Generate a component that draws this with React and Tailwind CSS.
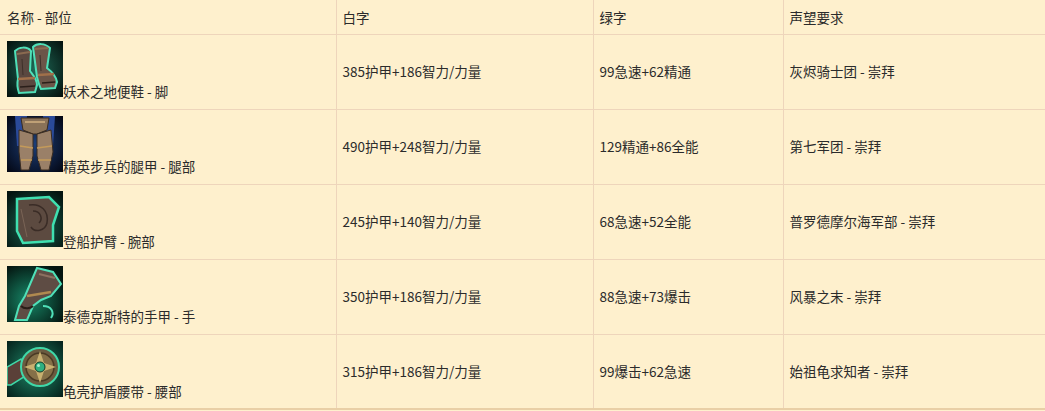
import React from "react";

// item icons drawn roughly after the game icons
const Boots = () => (
    <svg width="56" height="56" viewBox="0 0 56 56" className="block">
        <defs>
            <radialGradient id="bg1" cx="50%" cy="50%" r="70%">
                <stop offset="0%" stopColor="#1f6b58" />
                <stop offset="100%" stopColor="#04100d" />
            </radialGradient>
        </defs>
        <rect width="56" height="56" fill="url(#bg1)" />
        <path d="M8 10 C12 6 20 5 24 10 L23 30 C26 34 30 38 30 44 L28 51 L12 52 C10 46 10 42 11 38 Z" fill="#5a4840" stroke="#4fe0b8" strokeWidth="2" />
        <path d="M26 6 C30 2 38 2 43 7 L40 27 C44 30 49 35 50 41 L48 47 L34 48 C32 44 31 40 30 36 Z" fill="#6b5548" stroke="#4fe0b8" strokeWidth="2" />
        <path d="M11 38 L28 37 M31 34 L47 33" stroke="#a0704a" strokeWidth="2.5" />
        <path d="M10 13 L23 11 M28 8 L41 7" stroke="#8a6a50" strokeWidth="2" />
        <path d="M13 46 L28 45 M35 42 L48 41" stroke="#2a1f1a" strokeWidth="1.5" />
        <path d="M15 18 L16 34 M33 14 L34 30" stroke="#3e302a" strokeWidth="1" />
    </svg>
);

const Legs = () => (
    <svg width="56" height="56" viewBox="0 0 56 56" className="block">
        <defs>
            <radialGradient id="bg2" cx="50%" cy="50%" r="70%">
                <stop offset="0%" stopColor="#1c3f7a" />
                <stop offset="100%" stopColor="#030612" />
            </radialGradient>
        </defs>
        <rect width="56" height="56" fill="url(#bg2)" />
        <path d="M8 0 L20 0 L16 30 L10 30 Z" fill="#2a4a9a" />
        <path d="M36 0 L48 0 L46 30 L40 30 Z" fill="#2a4a9a" />
        <path d="M14 2 L42 2 L40 14 L30 18 L26 18 L16 14 Z" fill="#8a7258" stroke="#3a2c20" strokeWidth="1" />
        <path d="M12 14 L26 18 L26 40 L22 54 L14 54 L12 36 Z" fill="#9a8068" stroke="#3a2c20" strokeWidth="1" />
        <path d="M30 18 L44 14 L46 36 L42 54 L34 54 L30 40 Z" fill="#9a8068" stroke="#3a2c20" strokeWidth="1" />
        <path d="M13 30 L26 32 M30 32 L45 30 M14 44 L25 44 M31 44 L44 44" stroke="#c49a5a" strokeWidth="1.5" />
        <path d="M18 6 L38 6" stroke="#d0b080" strokeWidth="1.5" />
    </svg>
);

const Bracer = () => (
    <svg width="56" height="56" viewBox="0 0 56 56" className="block">
        <defs>
            <radialGradient id="bg3" cx="50%" cy="60%" r="70%">
                <stop offset="0%" stopColor="#1a6a55" />
                <stop offset="100%" stopColor="#041410" />
            </radialGradient>
        </defs>
        <rect width="56" height="56" fill="url(#bg3)" />
        <path d="M10 8 L42 6 L52 16 L46 34 L46 50 L16 52 L10 40 Z" fill="#5c4a40" stroke="#3fe0b0" strokeWidth="2.5" />
        <path d="M22 14 C34 12 42 20 40 32 C38 40 28 42 24 36" fill="none" stroke="#3a2c26" strokeWidth="1.5" />
        <path d="M26 20 C34 20 36 28 32 32" fill="none" stroke="#3a2c26" strokeWidth="1.5" />
        <path d="M14 18 L20 46" stroke="#7a6456" strokeWidth="1" />
    </svg>
);

const Gauntlet = () => (
    <svg width="56" height="56" viewBox="0 0 56 56" className="block">
        <defs>
            <radialGradient id="bg4" cx="40%" cy="60%" r="70%">
                <stop offset="0%" stopColor="#178868" />
                <stop offset="100%" stopColor="#04140f" />
            </radialGradient>
        </defs>
        <rect width="56" height="56" fill="url(#bg4)" />
        <path d="M30 2 L46 6 L54 18 L44 30 L34 34 L26 40 L20 54 L8 54 L12 40 L18 30 Z" fill="#5e4c44" stroke="#4fe0b8" strokeWidth="2" />
        <path d="M20 30 L44 26" stroke="#b08a50" strokeWidth="2.5" />
        <path d="M14 40 C18 44 24 42 26 40" fill="none" stroke="#2a1e18" strokeWidth="2" />
        <path d="M32 8 L48 12" stroke="#8c7060" strokeWidth="2" />
        <path d="M36 40 C44 40 48 46 44 52" fill="none" stroke="#4fe0b8" strokeWidth="2" />
    </svg>
);

const Belt = () => (
    <svg width="56" height="56" viewBox="0 0 56 56" className="block">
        <defs>
            <radialGradient id="bg5" cx="50%" cy="50%" r="70%">
                <stop offset="0%" stopColor="#1f8a6a" />
                <stop offset="100%" stopColor="#05201a" />
            </radialGradient>
        </defs>
        <rect width="56" height="56" fill="url(#bg5)" />
        <path d="M0 26 L14 18 L20 34 L4 44 L0 44 Z" fill="#5a4038" stroke="#3fd8a8" strokeWidth="1.5" />
        <circle cx="33" cy="26" r="19" fill="#6a5a40" stroke="#3fd8a8" strokeWidth="2" />
        <circle cx="33" cy="26" r="14" fill="#857048" stroke="#4a3a24" strokeWidth="1.5" />
        <path d="M33 10 L37 22 L49 26 L37 30 L33 42 L29 30 L17 26 L29 22 Z" fill="#c8b070" />
        <circle cx="33" cy="26" r="5" fill="#2fb080" stroke="#0e3a2a" strokeWidth="1" />
        <circle cx="31.5" cy="24.5" r="1.5" fill="#a8f0d0" />
    </svg>
);

const items = [
    { icon: Boots, name: "妖术之地便鞋", slot: "脚", white: "385护甲+186智力/力量", green: "99急速+62精通", rep: "灰烬骑士团 - 崇拜" },
    { icon: Legs, name: "精英步兵的腿甲", slot: "腿部", white: "490护甲+248智力/力量", green: "129精通+86全能", rep: "第七军团 - 崇拜" },
    { icon: Bracer, name: "登船护臂", slot: "腕部", white: "245护甲+140智力/力量", green: "68急速+52全能", rep: "普罗德摩尔海军部 - 崇拜" },
    { icon: Gauntlet, name: "泰德克斯特的手甲", slot: "手", white: "350护甲+186智力/力量", green: "88急速+73爆击", rep: "风暴之末 - 崇拜" },
    { icon: Belt, name: "龟壳护盾腰带", slot: "腰部", white: "315护甲+186智力/力量", green: "99爆击+62急速", rep: "始祖龟求知者 - 崇拜" },
];

const App = () => {
    return (
        <div className="w-[1045px] h-[411px] overflow-hidden bg-[#fef0cd] text-[13.5px] text-[#2b2b2b] font-['Noto_Sans_CJK_SC','Noto_Sans',sans-serif]">
            <table className="w-full border-collapse table-fixed border-b-2 border-[#e9cfa6]">
                <colgroup>
                    <col className="w-[336px]" />
                    <col className="w-[257px]" />
                    <col className="w-[190px]" />
                    <col />
                </colgroup>
                <thead>
                    <tr className="h-[34px]">
                        <th className="font-normal text-left px-[7px] border-b border-r border-[#eed5bb]">名称 - 部位</th>
                        <th className="font-normal text-left px-[6px] border-b border-r border-[#eed5bb]">白字</th>
                        <th className="font-normal text-left px-[6px] border-b border-r border-[#eed5bb]">绿字</th>
                        <th className="font-normal text-left px-[6px] border-b border-[#eed5bb]">声望要求</th>
                    </tr>
                </thead>
                <tbody>
                    {items.map((item, i) => {
                        const Icon = item.icon;
                        const last = i === items.length - 1;
                        return (
                            <tr key={i} className="h-[75px]">
                                <td className={`align-top pt-[6px] px-[7px] border-r border-[#eed5bb] ${last ? "" : "border-b"}`}>
                                    <div className="flex items-end">
                                        <Icon />
                                        <span className="leading-[13px] translate-y-[1px]">
                                            {item.name} - {item.slot}
                                        </span>
                                    </div>
                                </td>
                                <td className={`px-[6px] border-r border-[#eed5bb] ${last ? "" : "border-b"}`}>{item.white}</td>
                                <td className={`px-[6px] border-r border-[#eed5bb] ${last ? "" : "border-b"}`}>{item.green}</td>
                                <td className={`px-[6px] border-[#eed5bb] ${last ? "" : "border-b"}`}>{item.rep}</td>
                            </tr>
                        );
                    })}
                </tbody>
            </table>
        </div>
    );
};

export default App;
